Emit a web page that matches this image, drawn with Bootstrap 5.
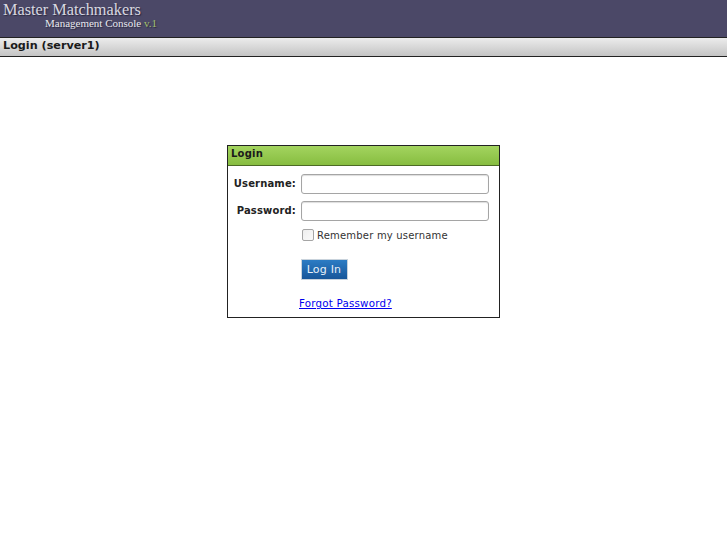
<!DOCTYPE html>
<html lang="en">
<head>
<meta charset="utf-8">
<title>Login</title>
<link href="https://cdn.jsdelivr.net/npm/bootstrap@5.3.0/dist/css/bootstrap.min.css" rel="stylesheet">
<style>
body{font-family:"DejaVu Sans",sans-serif;font-size:11px;color:#000;background:#fff;}
.mm-head{height:37px;background:#4b4867;padding:1px 0 0 3px;}
.mm-brand{font-family:"Liberation Serif",serif;font-size:16.3px;line-height:17px;color:#d8d8e0;text-shadow:1px 1px 1px #2a2840;}
.mm-sub{font-family:"Liberation Serif",serif;font-size:11px;line-height:10px;color:#e8e8ee;padding-left:42px;text-shadow:1px 1px 1px #2a2840;}
.mm-ver{color:#a3c06f;}
.mm-title{height:20px;border-top:1px solid #222;border-bottom:1px solid #222;background:linear-gradient(#ececec,#c4c4c4);font-weight:700;font-size:11.2px;line-height:16px;padding-left:3px;color:#1a1a1a;}
.mm-box{width:273px;height:173px;margin:88px 0 0 227px;border:1px solid #222;}
.mm-box-head{height:20px;background:linear-gradient(#a3d45f,#87bd40);border-bottom:1px solid #4c6b24;font-weight:700;font-size:10px;line-height:16px;padding-left:3px;letter-spacing:.2px;color:#1a1a1a;}
.mm-body{padding:8px 10px 0 0;}
.mm-row{height:27px;}
.mm-lab{width:68px;text-align:right;font-weight:700;font-size:10px;line-height:19px;letter-spacing:.15px;margin-right:5px;color:#222;}
.mm-input{width:188px;height:20px;border:1px solid #a5a5a5;border-radius:3px;box-shadow:inset 0 1px 1px #ddd;padding:0 3px;font-size:11px;}
.mm-check{padding-left:74px;height:20px;font-size:10px;letter-spacing:.2px;margin-top:-3px;margin-bottom:1px;color:#333;}
.mm-box-ch{width:12px;height:12px;border:1px solid #a5a5a5;border-radius:2px;background:linear-gradient(135deg,#eee,#fafafa);margin-right:3px;}
.mm-btn{width:47px;height:21px;background:linear-gradient(#2c7cc4,#17569a);color:#e8f0f8;border:1px solid #c9d3dc;border-radius:0;font-size:11px;line-height:16px;padding:1px 1px 0 0;margin:14px 0 0 73px;display:block;letter-spacing:.2px;}
.mm-forgot{display:block;margin:17px 0 0 71px;color:#00e;font-size:10.3px;line-height:13px;letter-spacing:.2px;}
</style>
</head>
<body>
<header class="mm-head">
<div class="mm-brand">Master Matchmakers</div>
<div class="mm-sub">Management Console <span class="mm-ver">v.1</span></div>
</header>
<div class="mm-title">Login (server1)</div>
<main class="mm-box">
<div class="mm-box-head">Login</div>
<form class="mm-body">
<div class="mm-row d-flex align-items-start"><label class="mm-lab" for="u">Username:</label><input class="mm-input" id="u" type="text"></div>
<div class="mm-row d-flex align-items-start"><label class="mm-lab" for="p">Password:</label><input class="mm-input" id="p" type="password"></div>
<div class="mm-check d-flex align-items-center"><span class="mm-box-ch"></span><span>Remember my username</span></div>
<button type="button" class="mm-btn">Log In</button>
<a class="mm-forgot" href="#">Forgot Password?</a>
</form>
</main>
<script src="https://cdn.jsdelivr.net/npm/bootstrap@5.3.0/dist/js/bootstrap.bundle.min.js"></script>
</body>
</html>
